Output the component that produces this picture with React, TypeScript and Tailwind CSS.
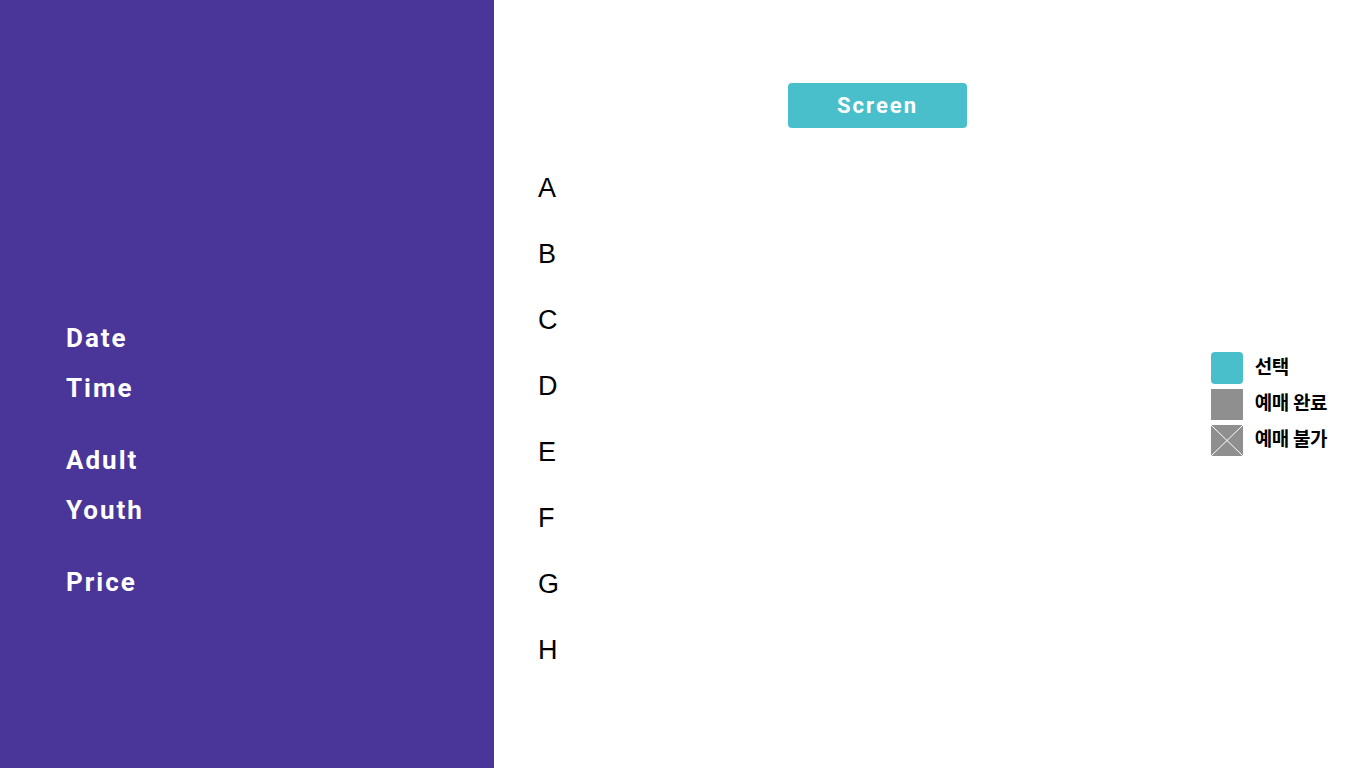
import React from "react";

const rows = ["A", "B", "C", "D", "E", "F", "G", "H"];

const Legend = () => (
	<div className="flex flex-col gap-[5px] pt-[352px] pr-[39px]">
		<div className="flex items-center gap-3">
			<div className="h-8 w-8 rounded-sm bg-[#48bfcb]" />
			<span className="text-[19px] font-bold tracking-tight text-black">선택</span>
		</div>
		<div className="flex items-center gap-3">
			<div className="h-[31px] w-8 bg-[#8f8f8f]" />
			<span className="text-[19px] font-bold tracking-tight text-black">예매 완료</span>
		</div>
		<div className="flex items-center gap-3">
			<svg width="32" height="31" viewBox="0 0 32 31" className="shrink-0">
				<rect width="32" height="31" fill="#8f8f8f" />
				<path d="M0 0L32 31M32 0L0 31" stroke="#ffffff" strokeWidth="1" />
			</svg>
			<span className="text-[19px] font-bold tracking-tight text-black">예매 불가</span>
		</div>
	</div>
);

const App = () => {
	return (
		<div className="flex h-screen w-full bg-white font-['Roboto','Noto_Sans_CJK_KR',sans-serif]">
			<aside className="flex h-full w-[494px] shrink-0 flex-col bg-[#4a3599] pt-[313px] pl-[66px] text-[26px] font-bold tracking-[2px] text-white">
				<div className="leading-[50px]">Date</div>
				<div className="leading-[50px]">Time</div>
				<div className="mt-[22px] leading-[50px]">Adult</div>
				<div className="leading-[50px]">Youth</div>
				<div className="mt-[22px] leading-[50px]">Price</div>
			</aside>
			<main className="flex flex-1">
				<div className="flex flex-1 flex-col">
					<div className="mt-[83px] ml-[294px] flex h-[45px] w-[179px] items-center justify-center rounded-sm bg-[#48bfcb] text-[22px] font-bold tracking-[2px] text-white">
						Screen
					</div>
					<div className="mt-[27px] flex flex-col pl-[44px] font-['Liberation_Sans',sans-serif] text-[27px] text-black">
						{rows.map((r) => (
							<div key={r} className="flex h-[66px] items-center">
								{r}
							</div>
						))}
					</div>
				</div>
				<Legend />
			</main>
		</div>
	);
};

export default App;
